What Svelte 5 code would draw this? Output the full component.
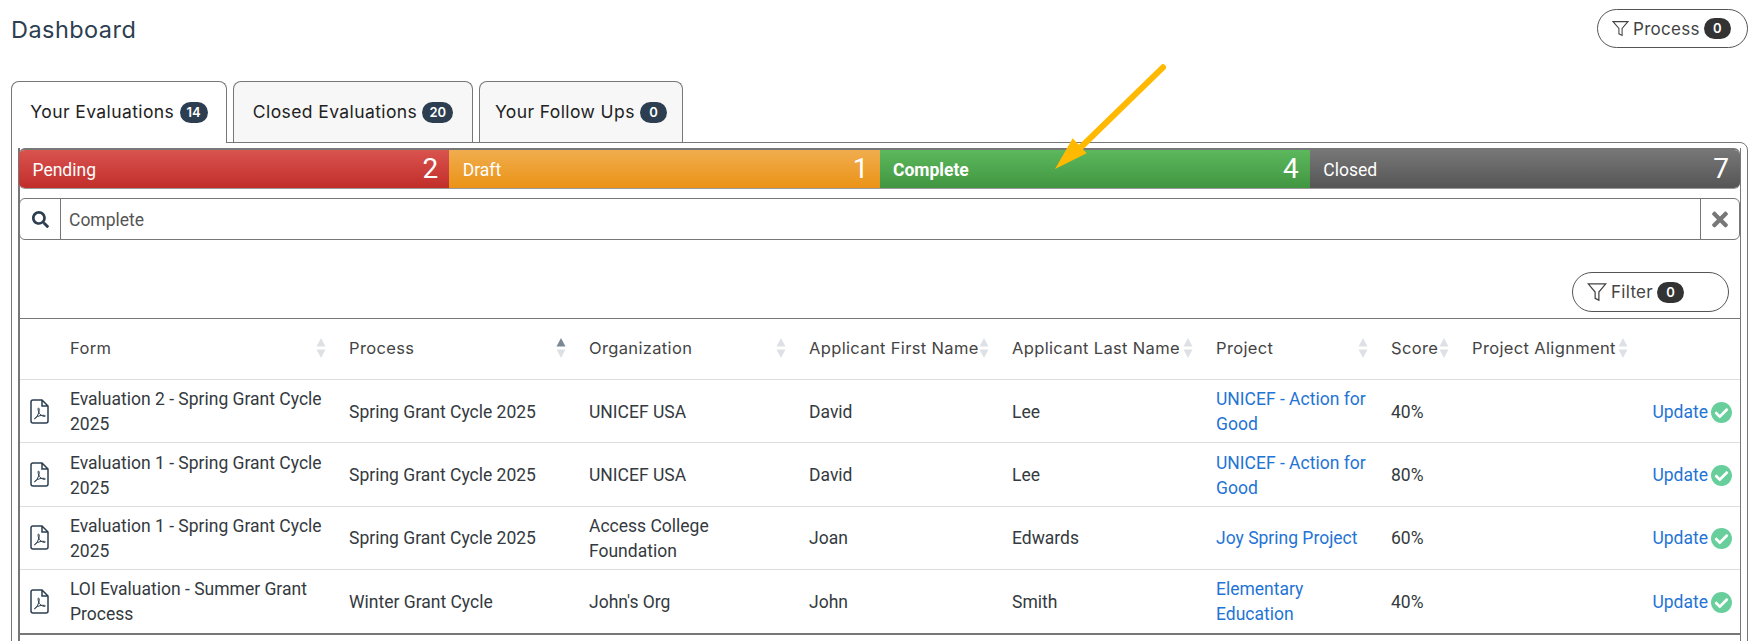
<script>
  const tabs = [
    { label: "Your Evaluations", count: 14, width: 216, active: true },
    { label: "Closed Evaluations", count: 20, width: 240 },
    { label: "Your Follow Ups", count: 0, width: 204 }
  ];

  const statuses = [
    { label: "Pending", count: 2, cls: "red" },
    { label: "Draft", count: 1, cls: "orange" },
    { label: "Complete", count: 4, cls: "green" },
    { label: "Closed", count: 7, cls: "grey" }
  ];

  const columns = [
    { label: "Form" },
    { label: "Process", sorted: true },
    { label: "Organization" },
    { label: "Applicant First Name" },
    { label: "Applicant Last Name" },
    { label: "Project" },
    { label: "Score" },
    { label: "Project Alignment" }
  ];

  const rows = [
    { form: "Evaluation 2 - Spring Grant Cycle 2025", process: "Spring Grant Cycle 2025", org: "UNICEF USA", first: "David", last: "Lee", project: "UNICEF - Action for Good", score: "40%" },
    { form: "Evaluation 1 - Spring Grant Cycle 2025", process: "Spring Grant Cycle 2025", org: "UNICEF USA", first: "David", last: "Lee", project: "UNICEF - Action for Good", score: "80%" },
    { form: "Evaluation 1 - Spring Grant Cycle 2025", process: "Spring Grant Cycle 2025", org: "Access College Foundation", first: "Joan", last: "Edwards", project: "Joy Spring Project", score: "60%" },
    { form: "LOI Evaluation - Summer Grant Process", process: "Winter Grant Cycle", org: "John's Org", first: "John", last: "Smith", project: "Elementary Education", score: "40%" }
  ];
</script>

<div class="page">
  <header class="top">
    <h1>Dashboard</h1>
    <button class="pill process">
      <svg class="funnel" viewBox="0 0 16 16"><path d="M1 1.500h14l-5.500 6.500v6.500l-3-1.500v-5z" /></svg>
      Process
      <span class="badge dark">0</span>
    </button>
  </header>

  <nav class="tabs">
    {#each tabs as tab}
      <div class="tab" class:active={tab.active} style="width:{tab.width}px">
        {tab.label} <span class="badge">{tab.count}</span>
      </div>
    {/each}
  </nav>

  <div class="panel">
    <div class="box">
      <div class="statuses">
        {#each statuses as s}
          <div class="status {s.cls}">
            <span class="name">{s.label}</span>
            <span class="num">{s.count}</span>
          </div>
        {/each}
      </div>

      <div class="search">
        <span class="addon">
          <svg class="search-icon" viewBox="0 0 512 512"><path d="M505 442.7L405.3 343c-4.5-4.5-10.6-7-17-7H372c27.6-35.3 44-79.7 44-128C416 93.1 322.9 0 208 0S0 93.1 0 208s93.1 208 208 208c48.3 0 92.7-16.4 128-44v16.3c0 6.4 2.5 12.5 7 17l99.7 99.7c9.4 9.4 24.6 9.4 33.9 0l28.3-28.3c9.4-9.4 9.4-24.6.1-34zM208 336c-70.7 0-128-57.2-128-128 0-70.7 57.2-128 128-128 70.7 0 128 57.2 128 128 0 70.7-57.2 128-128 128z" /></svg>
        </span>
        <span class="term">Complete</span>
        <span class="addon clear">
          <svg class="x-icon" viewBox="0 0 352 512"><path d="M242.72 256l100.07-100.07c12.28-12.28 12.28-32.19 0-44.48l-22.24-22.24c-12.28-12.28-32.19-12.28-44.48 0L176 189.28 75.93 89.21c-12.28-12.28-32.19-12.28-44.48 0L9.21 111.45c-12.28 12.28-12.28 32.19 0 44.48L109.28 256 9.21 356.07c-12.28 12.28-12.28 32.19 0 44.48l22.24 22.24c12.28 12.28 32.2 12.28 44.48 0L176 322.72l100.07 100.07c12.28 12.28 32.2 12.28 44.48 0l22.24-22.24c12.28-12.28 12.28-32.19 0-44.48L242.72 256z" /></svg>
        </span>
      </div>

      <div class="filter-row">
        <button class="pill filter">
          <svg class="funnel" viewBox="0 0 16 16"><path d="M1 1.500h14l-5.500 6.500v6.500l-3-1.500v-5z" /></svg>
          Filter
          <span class="badge dark">0</span>
        </button>
      </div>

      <table>
        <colgroup>
          <col style="width:42px" />
          <col style="width:279px" />
          <col style="width:240px" />
          <col style="width:220px" />
          <col style="width:203px" />
          <col style="width:204px" />
          <col style="width:175px" />
          <col style="width:81px" />
          <col style="width:179px" />
          <col />
        </colgroup>
        <thead>
          <tr>
            <th></th>
            {#each columns as col}
              <th>
                <div class="th">
                  <span>{col.label}</span>
                  <svg class="sort" viewBox="0 0 10 20">
                    <path class:on={col.sorted} d="M5 0l4.500 8.500h-9z" />
                    <path d="M5 20l-4.500-8.500h9z" />
                  </svg>
                </div>
              </th>
            {/each}
            <th></th>
          </tr>
        </thead>
        <tbody>
          {#each rows as row}
            <tr>
              <td class="icon-cell">
                <svg class="pdf" viewBox="0 0 19 25">
                  <path d="M12 1H3a2 2 0 0 0-2 2v19a2 2 0 0 0 2 2h13a2 2 0 0 0 2-2V7z M12 1v6h6" />
                  <path class="thin" d="M4.500 20c2-1.200 3.600-4 4.500-7.500.4-2 .2-3.500-.4-3.500-.7 0-.7 2 .1 4 .9 2.300 2.800 4 5.800 4.500 1 .1 1.200-.9.100-1.100-3-.4-6.500.4-9.200 2.300-.6.500-1.100 1.300-.9 1.300z" />
                </svg>
              </td>
              <td>{row.form}</td>
              <td>{row.process}</td>
              <td>{row.org}</td>
              <td>{row.first}</td>
              <td>{row.last}</td>
              <td><a href="#top">{row.project}</a></td>
              <td>{row.score}</td>
              <td></td>
              <td>
                <div class="update">
                  <a href="#top">Update</a>
                  <svg class="check" viewBox="8 8 496 496"><path d="M504 256c0 136.967-111.033 248-248 248S8 392.967 8 256 119.033 8 256 8s248 111.033 248 248zM227.314 387.314l184-184c6.248-6.248 6.248-16.379 0-22.627l-22.627-22.627c-6.248-6.249-16.379-6.249-22.628 0L216 308.118l-70.059-70.059c-6.248-6.248-16.379-6.248-22.628 0l-22.627 22.627c-6.248 6.248-6.248 16.379 0 22.627l104 104c6.249 6.249 16.379 6.249 22.628.001z" /></svg>
                </div>
              </td>
            </tr>
          {/each}
        </tbody>
      </table>
    </div>
  </div>

  <svg class="arrow" viewBox="0 0 130 120" aria-hidden="true">
    <path class="shaft" d="M123 12.300L38 95" />
    <path class="head" d="M15 114L32.700 83.300L46.700 98.300z" />
  </svg>
</div>

<style>
  :global(body) {
    margin: 0;
    background: #fff;
  }

  .page {
    position: relative;
    height: 641px;
    overflow: hidden;
    font-family: Roboto, sans-serif;
    font-size: 17.5px;
    color: #343a40;
  }

  .top {
    display: flex;
    justify-content: space-between;
    align-items: flex-start;
    padding: 9px 14px 0 11px;
    height: 81px;
    box-sizing: border-box;
  }

  h1 {
    margin: 6px 0 0;
    font-family: Inter, sans-serif;
    font-weight: 400;
    font-size: 23.5px;
    letter-spacing: 0.45px;
    line-height: 30px;
    color: #2c3e50;
  }

  .pill {
    display: flex;
    align-items: center;
    background: #fff;
    border: 1px solid #555;
    border-radius: 20px;
    font-family: Inter, sans-serif;
    font-size: 17px;
    letter-spacing: 0.3px;
    color: #444;
    box-sizing: border-box;
    padding: 0 0 0 14px;
    gap: 4px;
  }

  .process {
    width: 151px;
    height: 39px;
  }

  .filter {
    width: 157px;
    height: 40px;
  }

  .funnel {
    width: 17px;
    height: 17px;
    flex: none;
    fill: none;
    stroke: #444;
    stroke-width: 1;
  }

  .filter .funnel {
    width: 20px;
    height: 20px;
  }

  .badge {
    display: inline-block;
    box-sizing: border-box;
    min-width: 27px;
    padding: 0 7px;
    height: 21px;
    line-height: 21px;
    border-radius: 11px;
    background: #2c3e50;
    color: #fff;
    font-family: Inter, sans-serif;
    font-size: 13px;
    letter-spacing: 0;
    font-weight: 600;
    text-align: center;
    vertical-align: 1px;
  }

  .badge.dark {
    background: #333;
  }

  .tabs {
    display: flex;
    gap: 6px;
    padding-left: 11px;
    height: 61px;
    position: relative;
    z-index: 1;
  }

  .tab {
    height: 61px;
    box-sizing: border-box;
    padding-top: 19px;
    border: 1px solid #777;
    border-bottom: 0;
    border-radius: 8px 8px 0 0;
    background: #f7f7f7;
    font-family: Inter, sans-serif;
    font-size: 17.5px;
    letter-spacing: 0.4px;
    line-height: 22px;
    color: #222;
    white-space: nowrap;
    text-align: center;
  }

  .tab.active {
    background: #fff;
    height: 62px;
  }

  .panel {
    margin: 0 14px 0 11px;
    border: 1px solid #777;
    border-radius: 0 8px 0 0;
    padding: 5px 6px 0 6px;
  }

  .box {
    border: 1px solid #777;
    border-left-width: 2px;
    border-top: 0;
    padding-bottom: 60px;
  }

  .statuses {
    display: grid;
    grid-template-columns: repeat(4, 1fr);
    height: 41px;
    margin-left: -1px;
    border-top: 2px solid #777;
    border-bottom: 1px solid #999;
    box-sizing: border-box;
    border-radius: 6px;
    overflow: hidden;
  }

  .status {
    display: flex;
    justify-content: space-between;
    align-items: center;
    padding: 2px 11px 0 13.5px;
    color: #fff;
  }

  .name {
    font-size: 17.5px;
  }

  .num {
    font-size: 28px;
    line-height: 30px;
    margin-top: -2px;
  }

  .red { background: linear-gradient(#d9534f, #c12e2a); }
  .orange { background: linear-gradient(#f0ad4e, #eb9316); }
  .green { background: linear-gradient(#5cb85c, #419641); }
  .green .name { font-weight: 700; }
  .grey { background: linear-gradient(#777, #555); }

  .search {
    display: flex;
    align-items: stretch;
    height: 42px;
    margin: 9px 0 0 -1px;
    border: 1px solid #777;
    border-radius: 6px;
    box-sizing: border-box;
  }

  .addon {
    display: flex;
    align-items: center;
    justify-content: center;
    width: 40px;
    border-right: 1px solid #777;
  }

  .addon.clear {
    width: 38px;
    border-right: 0;
    border-left: 1px solid #777;
  }

  .term {
    flex: 1;
    align-self: center;
    padding: 2px 0 0 8px;
    font-size: 17.5px;
    color: #555;
  }

  .search-icon {
    width: 17px;
    height: 17px;
    fill: #2c3e50;
  }

  .x-icon {
    width: 16px;
    height: 23px;
    fill: #777;
  }

  .filter-row {
    display: flex;
    justify-content: flex-end;
    padding: 32px 11px 6px 0;
  }

  table {
    width: 100%;
    table-layout: fixed;
    border-collapse: collapse;
    border-top: 1px solid #777;
    border-bottom: 2px solid #777;
  }

  th {
    height: 61px;
    padding: 0 15px 2px 8px;
    box-sizing: border-box;
    font-family: Inter, sans-serif;
    font-weight: 400;
    font-size: 16.5px;
    letter-spacing: 0.35px;
    color: #444;
    text-align: left;
    white-space: nowrap;
    border-bottom: 1px solid #ddd;
  }

  .th {
    display: flex;
    align-items: center;
    justify-content: space-between;
  }

  .sort {
    width: 10px;
    height: 20px;
    flex: none;
    fill: #dde1e6;
  }

  .sort .on {
    fill: #7a8794;
  }

  td {
    padding: 7.2px 8px 5.2px;
    line-height: 25px;
    border-bottom: 1px solid #ddd;
    vertical-align: middle;
  }

  tbody tr:last-child td {
    border-bottom: 0;
  }

  a {
    color: #1f74d4;
    text-decoration: none;
  }

  .icon-cell {
    padding: 0 0 0 10px;
  }

  .pdf {
    display: block;
    width: 19px;
    height: 25px;
    fill: none;
    stroke: #2c3e50;
    stroke-width: 1.5;
  }

  .pdf .thin {
    stroke-width: 1;
  }

  .update {
    display: flex;
    align-items: center;
    justify-content: flex-end;
    gap: 3px;
  }

  .check {
    width: 21px;
    height: 21px;
    fill: #68cf9c;
    flex: none;
  }

  .arrow {
    position: absolute;
    left: 1040px;
    top: 55px;
    width: 130px;
    height: 120px;
    pointer-events: none;
  }

  .shaft {
    fill: none;
    stroke: #ffb900;
    stroke-width: 6;
    stroke-linecap: round;
  }

  .head {
    fill: #ffb900;
  }
</style>
